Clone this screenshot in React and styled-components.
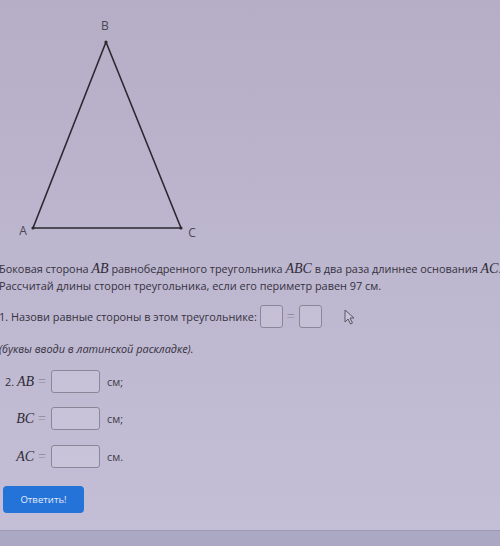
import styled, { createGlobalStyle } from "styled-components";

const GlobalStyle = createGlobalStyle`
	html, body {
		margin: 0;
		padding: 0;
		background: #bdb6cf;
	}
	body {
		font-family: "Open Sans", "Noto Sans", sans-serif;
		color: #34323d;
	}
`;

const Page = styled.div`
	width: 500px;
	height: 546px;
	overflow: hidden;
	display: flex;
	flex-direction: column;
	background: linear-gradient(180deg, #b6adc6 0%, #bdb6cf 45%, #c4bed6 100%);
`;

const Content = styled.div`
	flex: 1;
	margin-left: -1px;
`;

const Figure = styled.svg`
	display: block;
	width: 240px;
	height: 250px;
	margin-left: 1px;
`;

const Problem = styled.p`
	margin: 10px 0 0;
	font-size: 10.9px;
	line-height: 17px;
	white-space: nowrap;
`;

const M = styled.span`
	font-family: "Liberation Serif", "DejaVu Serif", serif;
	font-style: italic;
	font-size: 14px;
	color: #2e2c36;
`;

const Eq = styled.span`
	font-family: "Liberation Serif", serif;
	font-size: 14px;
	color: #8c8898;
	margin: 0 4px;
`;

const Row = styled.div`
	display: flex;
	align-items: center;
	font-size: 10.9px;
	margin-top: ${(p) => p.$top}px;
`;

const Label = styled.div`
	width: 51px;
	text-align: right;
	white-space: nowrap;
	padding-right: 1px;
`;

const Box = styled.div`
	box-sizing: border-box;
	width: ${(p) => p.$w}px;
	height: 23px;
	border: 1px solid #8b8798;
	border-radius: 3px;
	background: rgba(255, 255, 255, 0.12);
`;

const Unit = styled.span`
	margin-left: 7px;
	color: #3e3c48;
`;

const Hint = styled.p`
	margin: 12px 0 0;
	font-size: 10.9px;
	line-height: 17px;
	font-style: italic;
`;

const Cursor = styled.svg`
	margin-left: 22px;
	width: 12px;
	height: 16px;
`;

const Button = styled.button`
	margin: 18px 0 0 4px;
	width: 81px;
	height: 27px;
	border: none;
	border-radius: 4px;
	background: #2473d8;
	color: #e4ebf8;
	font-family: "Open Sans", sans-serif;
	font-size: 9.6px;
	padding: 0;
`;

const Footer = styled.div`
	height: 15px;
	border-top: 1px solid #9c9ab2;
	background: #aaa8c2;
`;

const Triangle = () => (
	<Figure viewBox="0 0 240 250">
		<polygon
			points="106,42 33,228 181,228"
			fill="none"
			stroke="#2b2930"
			strokeWidth="1.6"
			strokeLinejoin="round"
		/>
		<circle cx="106" cy="42" r="1.6" fill="#2b2930" />
		<circle cx="33" cy="228" r="1.6" fill="#2b2930" />
		<circle cx="181" cy="228" r="1.6" fill="#2b2930" />
		<g fontFamily="Open Sans, sans-serif" fontSize="12" fill="#4a4852" textAnchor="middle">
			<text x="105" y="30">B</text>
			<text x="23" y="235">A</text>
			<text x="192" y="237">C</text>
		</g>
	</Figure>
);

const App = () => (
	<>
		<GlobalStyle />
		<Page>
			<Content>
				<Triangle />
				<Problem>
					Боковая сторона <M>AB</M> равнобедренного треугольника <M>ABC</M> в два раза длиннее основания <M>AC</M>.
					<br />
					Рассчитай длины сторон треугольника, если его периметр равен 97 см.
				</Problem>

				<Row $top={11}>
					<span>1. Назови равные стороны в этом треугольнике:&nbsp;</span>
					<Box $w={23} />
					<Eq>=</Eq>
					<Box $w={23} />
					<Cursor viewBox="0 0 12 16">
						<path
							d="M1 1 L1 13 L4 10 L6.5 15 L8.5 14 L6 9 L10 9 Z"
							fill="#c9c4d8"
							stroke="#5a5766"
							strokeWidth="1"
							strokeLinejoin="round"
						/>
					</Cursor>
				</Row>

				<Hint>(буквы вводи в латинской раскладке).</Hint>

				<Row $top={13}>
					<Label>
						2. <M>AB</M>
						<Eq>=</Eq>
					</Label>
					<Box $w={49} />
					<Unit>см;</Unit>
				</Row>
				<Row $top={14}>
					<Label>
						<M>BC</M>
						<Eq>=</Eq>
					</Label>
					<Box $w={49} />
					<Unit>см;</Unit>
				</Row>
				<Row $top={15}>
					<Label>
						<M>AC</M>
						<Eq>=</Eq>
					</Label>
					<Box $w={49} />
					<Unit>см.</Unit>
				</Row>

				<Button>Ответить!</Button>
			</Content>
			<Footer />
		</Page>
	</>
);

export default App;
